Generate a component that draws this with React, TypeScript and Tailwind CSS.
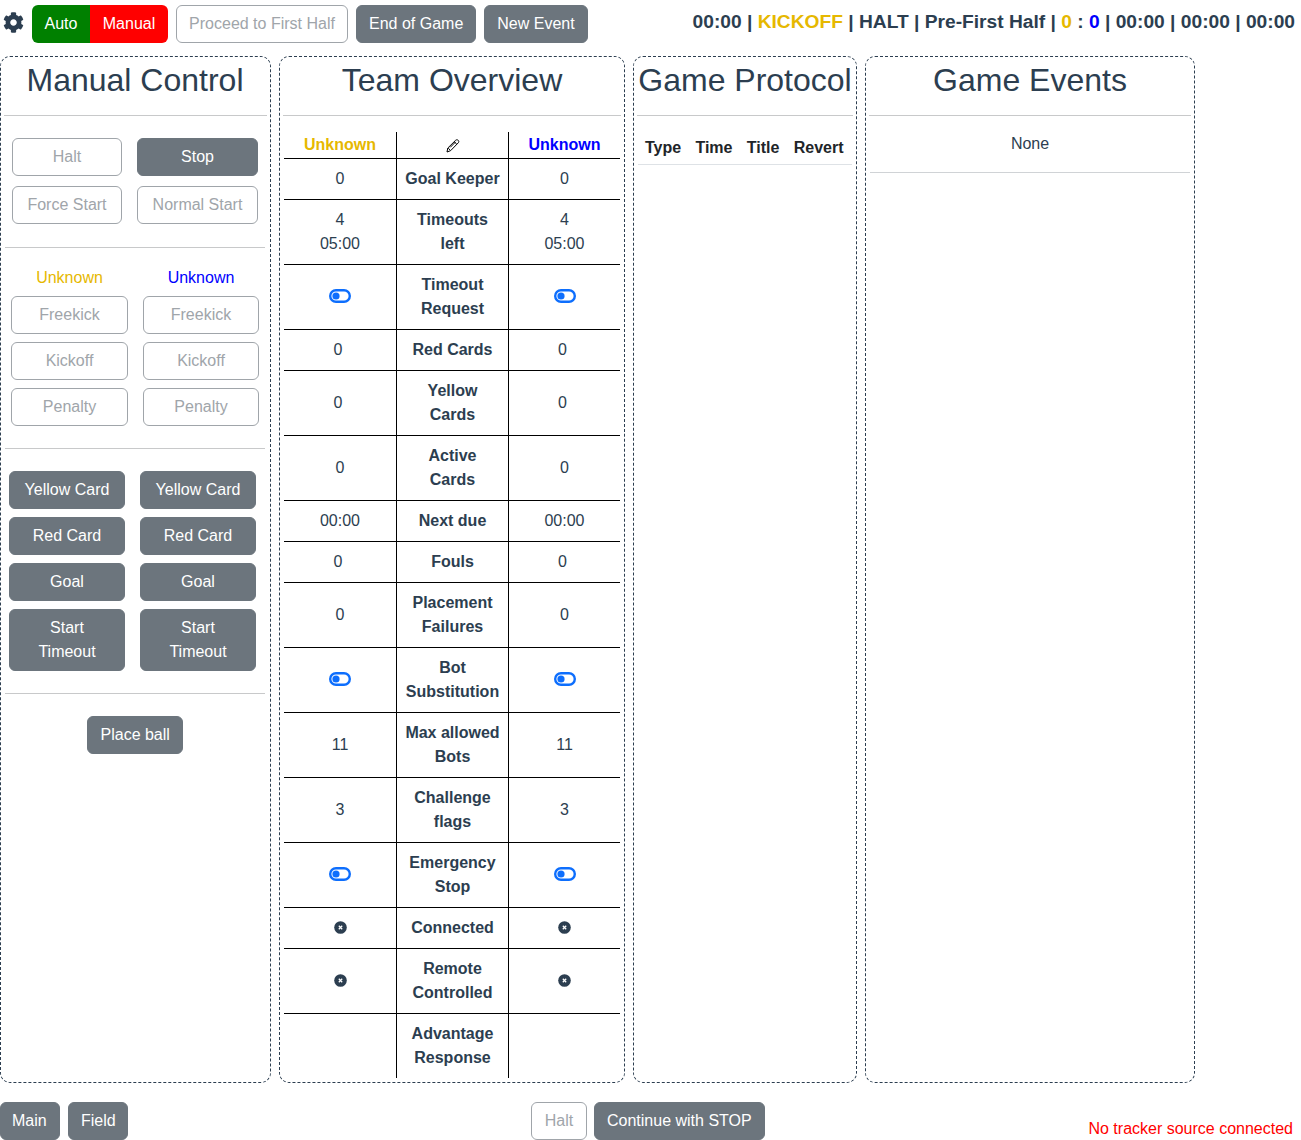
import React from 'react';
import { FaCog } from 'react-icons/fa';

const solid = 'bg-[#6c757d] border-[#6c757d] text-white';
const outline = 'bg-white border-[#a0a5aa] text-[#a0a5aa]';

function Btn({ children, off, className = '' }: { children: React.ReactNode; off?: boolean; className?: string }) {
  return (
    <button className={`border rounded-[6px] px-3 py-1.5 text-base leading-6 text-center ${off ? outline : solid} ${className}`}>
      {children}
    </button>
  );
}

function Panel({ title, width, titleClass = '', children }: { title: string; width: string; titleClass?: string; children: React.ReactNode }) {
  return (
    <section className={`${width} shrink-0 border border-dashed border-[#2c3e50] rounded-[10px] px-[3px] pt-[4px] pb-1 flex flex-col`}>
      <h2 className={`text-[32px] leading-[38px] text-center text-[#2c3e50] whitespace-nowrap h-[54px] ${titleClass}`}>{title}</h2>
      <Rule />
      {children}
    </section>
  );
}

function Rule({ className = '' }: { className?: string }) {
  return <hr className={`border-0 border-t border-[#c8c9ca] ${className}`} />;
}

const Toggle = () => (
  <svg viewBox="0 0 22 14" className="inline-block w-[22px] h-[14px] -translate-y-[1px]">
    <rect x="1.2" y="1.2" width="19.6" height="11.6" rx="5.8" fill="none" stroke="#0d6efd" strokeWidth="2.4" />
    <circle cx="7" cy="7" r="3.6" fill="#0d6efd" />
  </svg>
);

const Cross = () => (
  <svg viewBox="0 0 13 13" className="inline-block w-[13px] h-[13px] -translate-y-[1px]">
    <circle cx="6.5" cy="6.5" r="6.3" fill="#2c3e50" />
    <path d="M4.8 4.8l3.4 3.4M8.2 4.8l-3.4 3.4" stroke="#fff" strokeWidth="1.3" fill="none" />
  </svg>
);

const Pen = () => (
  <svg viewBox="0 0 14 14" className="inline-block w-[14px] h-[14px]" fill="none" stroke="#000" strokeWidth="1">
    <path d="M1 13l.8-4L9.600 1.300c.8-.7 1.800-.7 2.600 0s.8 1.800 0 2.600L4.700 11.600z" />
    <path d="M2.200 9.300l2 1.700M8.200 2.800l2.600 2.400" />
    <path d="M4.200 8.400l5.400-5.500" />
  </svg>
);

// nudge: a few of the values sit slightly left of centre
type Row = { label: React.ReactNode; value: React.ReactNode; nudge?: boolean };

const rows: Row[] = [
  { label: 'Goal Keeper', value: '0' },
  { label: <>Timeouts<br />left</>, value: <>4<br />05:00</> },
  { label: <>Timeout<br />Request</>, value: <Toggle /> },
  { label: 'Red Cards', value: '0', nudge: true },
  { label: <>Yellow<br />Cards</>, value: '0', nudge: true },
  { label: <>Active<br />Cards</>, value: '0' },
  { label: 'Next due', value: '00:00' },
  { label: 'Fouls', value: '0', nudge: true },
  { label: <>Placement<br />Failures</>, value: '0' },
  { label: <>Bot<br />Substitution</>, value: <Toggle /> },
  { label: <>Max allowed<br />Bots</>, value: '11' },
  { label: <>Challenge<br />flags</>, value: '3' },
  { label: <>Emergency<br />Stop</>, value: <Toggle /> },
  { label: 'Connected', value: <Cross /> },
  { label: <>Remote<br />Controlled</>, value: <Cross /> },
  { label: <>Advantage<br />Response</>, value: '' },
];

function TeamTable() {
  return (
    <table className="mt-4 ml-[1px] w-[336px] border-collapse table-fixed text-center text-[#2c3e50] text-base leading-6">
      <thead>
        <tr className="border-b border-black font-bold">
          <th className="w-[112.5px] h-[26px] p-0 border-r border-black text-[#e6b800]">Unknown</th>
          <th className="w-[112px] p-0 border-r border-black"><Pen /></th>
          <th className="p-0 text-[#0000ff]">Unknown</th>
        </tr>
      </thead>
      <tbody>
        {rows.map((r, i) => (
          <tr key={i} className={i < rows.length - 1 ? 'border-b border-black' : ''}>
            <td className="py-2 px-0 border-r border-black"><span className={r.nudge ? 'relative -left-[2px]' : ''}>{r.value}</span></td>
            <th className="py-2 px-0 border-r border-black font-bold">{r.label}</th>
            <td className="py-2 px-0"><span className={r.nudge ? 'relative -left-[2px]' : ''}>{r.value}</span></td>
          </tr>
        ))}
      </tbody>
    </table>
  );
}

export default function App() {
  return (
    <div className="w-[1301px] h-[1140px] flex flex-col bg-white text-[#2c3e50] text-base leading-6 overflow-hidden" style={{ fontFamily: '"Liberation Sans", Arial, sans-serif' }}>
      <header className="h-[56px] pt-[5px] flex items-start shrink-0">
        <FaCog className="text-[#2c3e50] text-[21px] ml-[3px] mt-[7px] shrink-0" />
        <div className="ml-[8px] flex">
          <button className="bg-[#008000] text-white rounded-l-[6px] px-3 py-[7px] leading-6 w-[58px]">Auto</button>
          <button className="bg-[#ff0000] text-white rounded-r-[6px] px-3 py-[7px] leading-6 w-[78px]">Manual</button>
        </div>
        <Btn off className="ml-[8px] w-[172px] whitespace-nowrap">Proceed to First Half</Btn>
        <Btn className="ml-[8px] w-[120px] whitespace-nowrap">End of Game</Btn>
        <Btn className="ml-[8px] w-[104px] whitespace-nowrap">New Event</Btn>
        <div className="ml-auto mr-[6px] mt-[1px] font-bold text-[19.2px] leading-[32px] text-[#2c3e50] whitespace-nowrap">
          00:00 | <span className="text-[#e6b800]">KICKOFF</span> | HALT | Pre-First Half | <span className="text-[#e6b800]">0</span> : <span className="text-[#0000ff]">0</span> | 00:00 | 00:00 | 00:00
        </div>
      </header>

      <main className="flex gap-2 h-[1027px] shrink-0">
        <Panel title="Manual Control" width="w-[271px]" titleClass="pr-[1px]">
          <div className="mt-[22px] ml-[8px] grid grid-cols-[110px_121px] gap-x-[15px] gap-y-[10px]">
            <Btn off>Halt</Btn>
            <Btn>Stop</Btn>
            <Btn off className="whitespace-nowrap">Force Start</Btn>
            <Btn off className="whitespace-nowrap">Normal Start</Btn>
          </div>
          <Rule className="mt-[23px] mx-[1px] w-[260px]" />
          <div className="mt-[18px] ml-[7px] grid grid-cols-[117px_116px] gap-x-[15px] gap-y-[8px] text-center">
            <div className="text-[#e6b800] h-[24px] -mb-[2px]">Unknown</div>
            <div className="text-[#0000ff] h-[24px] -mb-[2px]">Unknown</div>
            <Btn off>Freekick</Btn>
            <Btn off>Freekick</Btn>
            <Btn off>Kickoff</Btn>
            <Btn off>Kickoff</Btn>
            <Btn off>Penalty</Btn>
            <Btn off>Penalty</Btn>
          </div>
          <Rule className="mt-[22px] mx-[1px] w-[260px]" />
          <div className="mt-[22px] ml-[5px] grid grid-cols-[116px_116px] gap-x-[15px] gap-y-[8px]">
            <Btn className="whitespace-nowrap">Yellow Card</Btn>
            <Btn className="whitespace-nowrap">Yellow Card</Btn>
            <Btn>Red Card</Btn>
            <Btn>Red Card</Btn>
            <Btn>Goal</Btn>
            <Btn>Goal</Btn>
            <Btn>Start<br />Timeout</Btn>
            <Btn>Start<br />Timeout</Btn>
          </div>
          <Rule className="mt-[22px] mx-[1px] w-[260px]" />
          <div className="mt-[22px] pr-[2px] flex justify-center">
            <Btn className="w-[96px] whitespace-nowrap pl-[13px]">Place ball</Btn>
          </div>
        </Panel>

        <Panel title="Team Overview" width="w-[346px]">
          <TeamTable />
        </Panel>

        <Panel title="Game Protocol" width="w-[224px]">
          <table className="mt-[15px] ml-[1px] w-[214px] border-collapse text-[#212529]">
            <thead>
              <tr className="border-b border-[#dee2e6]">
                <th className="font-bold pt-[5px] pb-[4px] pl-[7px] pr-0 text-left h-[33px]">Type</th>
                <th className="font-bold pt-[5px] pb-[4px] pl-[14px] pr-0 text-left">Time</th>
                <th className="font-bold pt-[5px] pb-[4px] pl-[14px] pr-0 text-left">Title</th>
                <th className="font-bold pt-[5px] pb-[4px] pl-[14px] pr-[8px] text-left">Revert</th>
              </tr>
            </thead>
          </table>
        </Panel>

        <Panel title="Game Events" width="w-[330px]">
          <div className="mx-[1px] w-[320px]">
            <p className="text-center pt-[16px] pb-[16px]">None</p>
            <Rule className="border-[#d0d3d6]" />
          </div>
        </Panel>
      </main>

      <footer className="mt-[19px] grid grid-cols-[531px_auto_1fr] items-start">
        <div className="flex gap-2">
          <Btn className="w-[60px] pr-[13px] pl-[11px]">Main</Btn>
          <Btn className="w-[60px]">Field</Btn>
        </div>
        <div className="flex gap-[7px]">
          <Btn off className="w-[56px]">Halt</Btn>
          <Btn>Continue with STOP</Btn>
        </div>
        <div className="text-right pr-[8px] pt-[15px] text-[#ff0000]">No tracker source connected</div>
      </footer>
    </div>
  );
}
